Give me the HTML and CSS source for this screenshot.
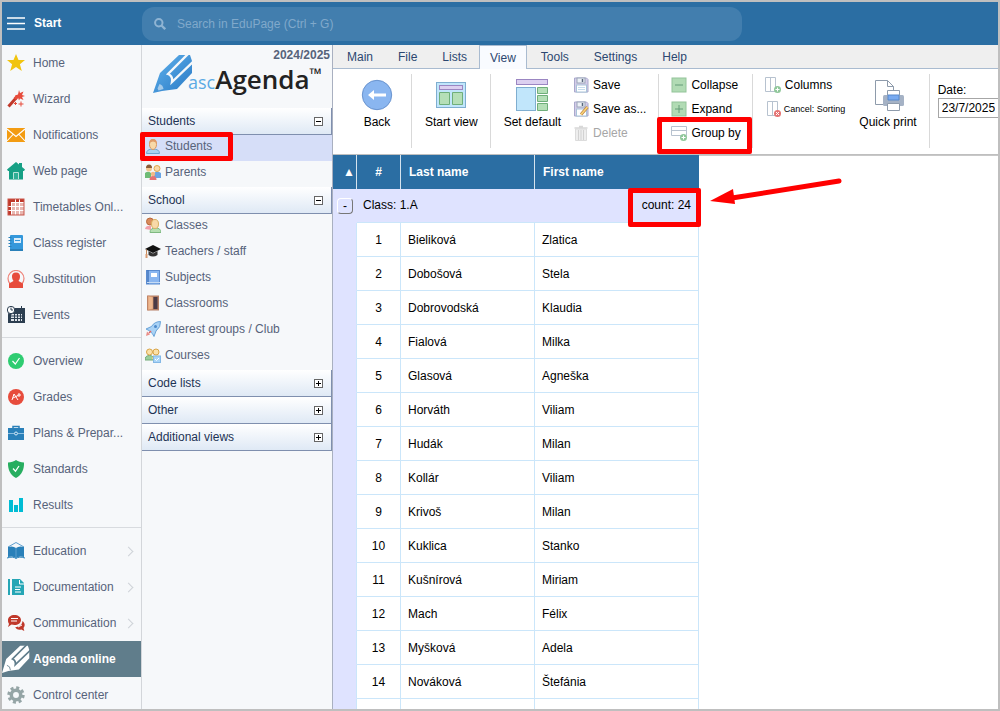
FILE: index.html
```html
<!DOCTYPE html>
<html lang="en">
<head>
<meta charset="utf-8">
<title>Agenda online - Students</title>
<link rel="stylesheet" href="styles.css">
</head>
<body>
<div class="app">
  <header class="topbar">
    <button class="menu-btn" type="button" aria-label="Menu"><svg width="18" height="14" viewBox="0 0 18 14"><path d="M0 1h18M0 6.500h18M0 12h18" stroke="#fff" stroke-width="1.700"/></svg></button>
    <span class="start">Start</span>
    <label class="search">
      <svg width="12" height="12" viewBox="0 0 12 12"><circle cx="4.800" cy="4.800" r="3.700" fill="none" stroke="#8fb4d3" stroke-width="2"/><path d="M7.500 7.500l3.700 3.700" stroke="#8fb4d3" stroke-width="2.300"/></svg>
      <input type="text" placeholder="Search in EduPage (Ctrl + G)" aria-label="Search in EduPage">
    </label>
  </header>

  <div class="workspace">
    <nav class="sidebar">
      <a href="#"><svg class="ico" viewBox="0 0 18 18"><path d="M9 0l2.500 6H18l-5.100 4.200L14.800 17 9 13.100 3.200 17l1.900-6.800L0 6h6.500z" fill="#f1c40f"/></svg>Home</a>
      <a href="#"><svg class="ico" viewBox="0 0 18 18"><path d="M1.500 16.500L9.500 7.500" stroke="#c0392b" stroke-width="3"/><path d="M8 9l2.500-3" stroke="#e74c3c" stroke-width="3.500"/><path d="M12 0l1 3 3.500-1.500L15 5l3 1-3 1 1.500 3L13 8.500l-1 2-1-3-3-2 3-1z" fill="#e74c3c"/><path d="M14 11.500v5M11.500 14h5M8.500 12v3M7 13.500h3" stroke="#e74c3c"/></svg>Wizard</a>
      <a href="#"><svg class="ico" viewBox="0 0 18 18"><rect y="2" width="18" height="14" fill="#f39c12"/><path d="M0 3l9 7.500L18 3M0 15l6-6.500M18 15l-6-6.500" fill="none" stroke="#fff" stroke-width="1.100"/></svg>Notifications</a>
      <a href="#"><svg class="ico" viewBox="0 0 18 18"><path d="M0 7.500L9 0l3 2.500V1h3v4l3 2.500-1 1.500h-1v8.500H2V9H1z" fill="#16a085"/><path d="M6.500 17v-6.500h5V17" fill="#2fae95" stroke="#b8e3da"/></svg>Web page</a>
      <a href="#"><svg class="ico" viewBox="0 0 18 18"><rect x="1" y="1" width="16" height="16" fill="#e8b6b0"/><path d="M1 1h16v3H1zM1 1h3v16H1z" fill="#c0392b"/><path d="M4.500 4v13M8.500 1v16M12.500 1v16M1 8.500h16M1 12.500h16M4 4.500h13" stroke="#fff"/><rect x="1" y="1" width="16" height="16" fill="none" stroke="#c9574b"/></svg>Timetables Onl...</a>
      <a href="#"><svg class="ico" viewBox="0 0 18 18"><rect x="3" y="1" width="13" height="16" rx="1" fill="#3498db"/><rect x="3" y="15" width="13" height="2" fill="#2980b9"/><path d="M1.500 3.500h3M1.500 6.500h3M1.500 9.500h3M1.500 12.500h3" stroke="#2980b9"/><rect x="7" y="4" width="7" height="5" fill="#d8ecf9"/><path d="M8 6.500h5" stroke="#3498db"/></svg>Class register</a>
      <a href="#"><svg class="ico" viewBox="0 0 18 18"><circle cx="9" cy="8.500" r="8" fill="none" stroke="#ef8378" stroke-width="1.200"/><path d="M9 2.500c3 0 4.300 2 4 4.500-.1 2-1 3-1.500 4l4.500 2.500V18H2v-4.500L6.500 11C6 10 5.100 9 5 7c-.3-2.500 1-4.500 4-4.500z" fill="#e74c3c"/></svg>Substitution</a>
      <a href="#"><svg class="ico" viewBox="0 0 18 18"><path d="M2 2h16v15H1V9z" fill="#2c3e50"/><circle cx="4" cy="4" r="3.700" fill="#fff" stroke="#2c3e50"/><path d="M4 1.500V4h2M14.500 0v4" fill="none" stroke="#2c3e50"/><path d="M5 8h10v7H4v-6z" fill="#dfe4e9"/><path d="M7.500 7v8M10.500 7v8M13.500 7v8M4 10h12M4 12.500h12" stroke="#2c3e50"/></svg>Events</a>
      <hr>
      <a href="#"><svg class="ico" viewBox="0 0 18 18"><circle cx="9" cy="9" r="8" fill="#2ecc71"/><path d="M5.500 9l2.800 3L12.500 6" fill="none" stroke="#fff" stroke-width="1.200"/></svg>Overview</a>
      <a href="#"><svg class="ico" viewBox="0 0 18 18"><circle cx="9" cy="9" r="8" fill="#e74c3c"/><path d="M5 12l2-6 4 6M6 10l5-2.500M12 5v4M10.500 7h3.500" fill="none" stroke="#fff"/></svg>Grades</a>
      <a href="#"><svg class="ico" viewBox="0 0 18 18"><path d="M6 4V2.500h6V4" fill="none" stroke="#2980b9" stroke-width="1.500"/><rect x="1" y="4" width="16" height="12" fill="#2980b9"/><path d="M1 9.500h6M11 9.500h6" stroke="#8fc0e2"/><circle cx="9" cy="9.500" r="1.500" fill="none" stroke="#d8ecf9"/></svg>Plans &amp; Prepar...</a>
      <a href="#"><svg class="ico" viewBox="0 0 18 18"><path d="M9 0c2 1.800 5 2.200 8 2.500C17.300 9 15 15 9 18 3 15 .700 9 1 2.500 4 2.200 7 1.800 9 0z" fill="#27ae60"/><path d="M6 8.500l2.500 2.700L12 6" fill="none" stroke="#fff" stroke-width="1.200"/></svg>Standards</a>
      <a href="#"><svg class="ico" viewBox="0 0 18 18"><path d="M2 4h4v12H2zM7 9h4v7H7zM12 2h4v14h-4z" fill="#00bcd4"/></svg>Results</a>
      <hr>
      <a href="#"><svg class="ico" viewBox="0 0 18 18"><path d="M1 5l8-4.500L17 5" fill="none" stroke="#5f9fce"/><path d="M1 5q5-1.500 8 1 3-2.500 8-1v10q-5-1.500-8 1-3-2.500-8-1z" fill="#2980b9"/><path d="M9 6v9" stroke="#5f9fce"/><path d="M0 16q6-2 9 .5 3-2.500 9-.5" fill="none" stroke="#2980b9"/></svg>Education<span class="chev"></span></a>
      <a href="#"><svg class="ico" viewBox="0 0 18 18"><path d="M1 1h2v16H1zM5 1h8l4 4v12H5z" fill="#26a6b5"/><path d="M12.500 2v4H17" fill="none" stroke="#fff"/><path d="M8 9h6M8 11.500h5M8 14h6" stroke="#fff"/></svg>Documentation<span class="chev"></span></a>
      <a href="#"><svg class="ico" viewBox="0 0 18 18"><path d="M1 13l1-3A5.500 5.500 0 0 1 1 6c0-3 3-5 6.500-5S14 3 14 6s-3 5-6.500 5c-1 0-2-.2-3-.5z" fill="#c0392b"/><path d="M15.500 7c3 2.500 2.500 5 1 7l.8 3-3-1.500c-3 .7-5.500-.5-6-2.500 4 0 7-2.500 7.200-6z" fill="#c0392b"/><path d="M4 4.500h7M4 7h6" stroke="#fff"/><path d="M11 13l4-2" stroke="#fff"/></svg>Communication<span class="chev"></span></a>
      <a href="#" class="active"><svg class="pen" viewBox="0 0 40 40"><path d="M0 40l6-20L26 1h11l2 6v12L24 35 9 37z" fill="#fff"/><path d="M35 0L15 20q5 2 4 8L41 7" fill="none" stroke="#607d8b" stroke-width="2.400"/><path d="M7 29q5 1 5 7" fill="none" stroke="#607d8b" stroke-width="1.200"/></svg>Agenda online</a>
      <a href="#"><svg class="ico" viewBox="0 0 18 18"><circle cx="9" cy="9" r="4.700" fill="none" stroke="#95a5a6" stroke-width="3.500"/><circle cx="9" cy="9" r="7.200" fill="none" stroke="#95a5a6" stroke-width="3" stroke-dasharray="3 2.650"/></svg>Control center</a>
    </nav>

    <aside class="views">
      <div class="brand">
        <div class="year">2024/2025</div>
        <div class="logo">
          <svg width="40" height="40" viewBox="0 0 40 40"><defs><linearGradient id="ink" x1="0" y1="0" x2="1" y2="1"><stop offset="0" stop-color="#62b4ee"/><stop offset="1" stop-color="#2878c4"/></linearGradient></defs><path d="M0 39l7-20L26 1h11l2 6v12L24 35 9 37z" fill="url(#ink)"/><path d="M35 0L15 20q5 2 4 8L41 7" fill="none" stroke="#f6f8fa" stroke-width="2.400"/><path d="M6.500 30q3.500 1 4 5l-5 1.500-1-2z" fill="#f6f8fa" opacity=".55"/></svg>
          <span class="asc">asc</span><span class="agenda">Agenda</span><span class="tm">™</span>
        </div>
      </div>
      <button class="section" type="button">Students<span class="sign"></span></button>
      <a href="#" class="selected"><svg class="ico16" viewBox="0 0 16 16"><path d="M1.500 15.500q0-4.500 6.500-4.500t6.500 4.500z" fill="#a8d4f2" stroke="#6ea6d0"/><ellipse cx="8" cy="6.500" rx="3.500" ry="5" fill="#f8d9a8" stroke="#d9965c"/><path d="M4 6Q4 1 8 1t4 5q-1-2.500-4-2.500T4 6z" fill="#e09a66"/></svg>Students</a>
      <a href="#"><svg class="ico16" viewBox="0 0 16 16"><path d="M0 14V9q3-2.500 6 0v5z" fill="#6fbb76"/><path d="M9 14V9q3-2.500 7 0v5z" fill="#6aa5e3"/><circle cx="4" cy="4.500" r="3" fill="#f3c790"/><path d="M1 4q0-3.500 3-3.500T7 4z" fill="#8a5c35"/><circle cx="12" cy="4.500" r="3" fill="#f8d9a8" stroke="#e0a84e"/><circle cx="8" cy="10" r="2.200" fill="#f3b985"/><path d="M4.500 16q0-4 3.500-4t3.500 4z" fill="#e57373"/></svg>Parents</a>
      <button class="section" type="button">School<span class="sign"></span></button>
      <a href="#"><svg class="ico16" viewBox="0 0 16 16"><path d="M0 12q1-4 6-3v4z" fill="#f2a0ab"/><circle cx="5" cy="4.500" r="3.500" fill="#d98b5c" stroke="#b9683c"/><path d="M5 15.500q0-4.500 5.500-4.500t5.500 4.500z" fill="#b5dfb1" stroke="#7fb981"/><ellipse cx="10" cy="7" rx="3.500" ry="4.500" fill="#f8d9a8" stroke="#d8b062"/></svg>Classes</a>
      <a href="#"><svg class="ico16" viewBox="0 0 16 16"><path d="M0 6l8-4 8 4-8 4z" fill="#111"/><path d="M3.500 8v4q4.500 3 9 0V8L8 10.500z" fill="#333"/><path d="M1.500 6.500V12" stroke="#c68b5c"/><path d="M.5 11h2v4h-2z" fill="#d99a70"/></svg>Teachers / staff</a>
      <a href="#"><svg class="ico16" viewBox="0 0 16 16"><rect x="1.500" y="1.500" width="13" height="13.500" fill="#8ab6f0" stroke="#5b8cd0"/><path d="M3 1v14" stroke="#4678be" stroke-width="1.500"/><rect x="6" y="4" width="6" height="4" fill="#fff"/><path d="M2 13.500h13" stroke="#c7dcf5"/></svg>Subjects</a>
      <a href="#"><svg class="ico16" viewBox="0 0 16 16"><rect x="2" y=".5" width="12" height="15" fill="#b57f66"/><path d="M7.500 2h5v12h-5z" fill="#4b3a46"/><path d="M3 1l5 1v12l-5 1z" fill="#efb890" stroke="#d4936c" stroke-width=".7"/></svg>Classrooms</a>
      <a href="#"><svg class="ico16" viewBox="0 0 16 16"><path d="M15.500.5q-6 0-9 5L1 8l3 1.500 3.500 3.200L9 15.500l2-5.500q5-4 4.500-9.500z" fill="#a9d2f5" stroke="#5f9cd4" stroke-width=".9"/><circle cx="10.500" cy="5.500" r="1.500" fill="#4d8acb"/><path d="M1 15l1-4.500 3 3z" fill="#ea8f88"/><path d="M4 12l2-2" stroke="#df6564" stroke-width="1.500"/></svg>Interest groups / Club</a>
      <a href="#"><svg class="ico16" viewBox="0 0 16 16"><path d="M0 13q0-4.500 4.500-4.500t4 4.500z" fill="#9ccf9c" stroke="#73aa78"/><path d="M7 12q0-3.500 4.500-3.500T16 12z" fill="#f8d27c"/><circle cx="4.500" cy="5" r="3" fill="#fbe1a8" stroke="#d9a548"/><circle cx="11" cy="5" r="3" fill="#fbe1a8" stroke="#d9a548"/><rect x="8.500" y="9" width="7" height="6.500" fill="#a8d4f7" stroke="#84b8e6"/><path d="M10 12l1.500 1.500L14 11" fill="none" stroke="#fff"/></svg>Courses</a>
      <button class="section" type="button">Code lists<span class="sign plus"></span></button>
      <button class="section" type="button">Other<span class="sign plus"></span></button>
      <button class="section" type="button">Additional views<span class="sign plus"></span></button>
    </aside>

    <main class="content">
      <div class="tabs">
        <button type="button">Main</button><button type="button">File</button><button type="button">Lists</button><button type="button" class="current">View</button><button type="button">Tools</button><button type="button">Settings</button><button type="button">Help</button>
      </div>

      <div class="ribbon">
        <div class="group back">
          <button class="big" type="button"><svg width="32" height="32" viewBox="0 0 32 32"><circle cx="16" cy="16" r="14.700" fill="#8ab6f0" stroke="#6a94cf"/><path d="M7 16l6-5v3.500h12v3H13V21z" fill="#fff"/></svg>Back</button>
        </div>
        <div class="group start-view">
          <button class="big" type="button"><svg width="32" height="32" viewBox="0 0 32 32"><rect x="1.500" y="3.500" width="29" height="25" fill="#c1e6fb" stroke="#7faed0"/><rect x="4.500" y="6.500" width="23" height="4" fill="#dcd0f0" stroke="#9b86c2"/><path d="M4.500 13.500h10v12h-10zM17.500 13.500h10v12h-10z" fill="#b5dfb7" stroke="#6fae7a"/></svg>Start view</button>
        </div>
        <div class="group default">
          <button class="big" type="button"><svg width="32" height="32" viewBox="0 0 32 32"><rect x=".5" y=".5" width="31" height="5" fill="#dcd0f0" stroke="#9b86c2"/><rect x=".5" y="8.500" width="19" height="23" fill="#c1e6fb" stroke="#7faed0"/><path d="M21.500 8.500h10v6h-10zM21.500 16.500h10v6h-10zM21.500 24.500h10v7h-10z" fill="#b5dfb7" stroke="#6fae7a"/></svg>Set default</button>
          <div class="stack">
            <button type="button"><svg class="ico16" viewBox="0 0 16 16"><path d="M1.500 1h12l1.500 1.500V15H1.500z" fill="#d4cce9" stroke="#a9a9cc"/><rect x="4" y="1" width="8" height="5" fill="#edf1f6" stroke="#9aa5b8"/><path d="M9.500 2v3" stroke="#58677c" stroke-width="1.500"/><rect x="3.500" y="8" width="10" height="7" fill="#fff" stroke="#a8c4d8"/><path d="M5 10.500h7M5 12.500h7" stroke="#c4dced"/></svg>Save</button>
            <button type="button"><svg class="ico16" viewBox="0 0 16 16"><path d="M1.500 1h12l1.500 1.500V15H1.500z" fill="#d4cce9" stroke="#a9a9cc"/><rect x="4" y="1" width="8" height="5" fill="#edf1f6" stroke="#9aa5b8"/><path d="M9.500 2v3" stroke="#58677c" stroke-width="1.500"/><rect x="3.500" y="8" width="10" height="7" fill="#fff" stroke="#a8c4d8"/><path d="M8 13.500L14.500 6" stroke="#bd8545" stroke-width="3"/><path d="M8 13.500L14.500 6" stroke="#fbd578" stroke-width="1.600"/></svg>Save as...</button>
            <button type="button" disabled><svg class="ico16" viewBox="0 0 16 16"><path d="M2.500 4h11v11.500h-11z" fill="#eee" stroke="#dcdcdc"/><path d="M1.500 3h13M6 1.500h4" stroke="#d8d8d8" stroke-width="1.500"/><path d="M5.500 5v10M8 5v10M10.500 5v10" stroke="#d2d2d2"/></svg>Delete</button>
          </div>
        </div>
        <div class="group">
          <div class="stack rows">
            <button type="button"><svg class="ico16" viewBox="0 0 16 16"><rect x="1" y="1" width="14" height="14" fill="#b1dbb4" stroke="#93c49a"/><path d="M4 8h8" stroke="#659c78"/></svg>Collapse</button>
            <button type="button"><svg class="ico16" viewBox="0 0 16 16"><rect x="1" y="1" width="14" height="14" fill="#b1dbb4" stroke="#93c49a"/><path d="M4 8h8M8 4v8" stroke="#659c78"/></svg>Expand</button>
            <button type="button"><svg class="ico16" viewBox="0 0 16 16"><path d="M.5 1.500h15v9H.5zM.5 5.500h15" fill="#fff" stroke="#b7c2cf"/><circle cx="12.500" cy="12.500" r="3.500" fill="#8fc79a"/><path d="M10.500 12.500h4M12.500 10.500v4" stroke="#fff"/></svg>Group by</button>
          </div>
        </div>
        <div class="group print">
          <div class="stack">
            <button type="button"><svg class="ico16" viewBox="0 0 16 16"><path d="M.5.500h10v14H.5zM5.500.500v14" fill="#fff" stroke="#b7c2cf"/><circle cx="12.500" cy="12.500" r="3.500" fill="#8fc79a"/><path d="M10.500 12.500h4M12.500 10.500v4" stroke="#fff"/></svg>Columns</button>
            <button type="button" class="small"><svg class="ico16" viewBox="0 0 16 16"><path d="M2.500.500h10v14h-10zM7.500.500v14" fill="#fff" stroke="#b7c2cf"/><circle cx="12.500" cy="12.500" r="3.500" fill="#e57373"/><path d="M11 11l3 3M14 11l-3 3" stroke="#fff"/></svg>Cancel: Sorting</button>
          </div>
          <button class="big" type="button"><svg width="32" height="32" viewBox="0 0 32 32"><path d="M3.500 1.500h12l6 6v18h-18z" fill="#fff" stroke="#8e9bab"/><path d="M15.500 1.500v6h6" fill="none" stroke="#8e9bab"/><path d="M15.500 11.500h12v8h-12z" fill="#fff" stroke="#8e9bab"/><rect x="11" y="16" width="21" height="11" rx="1.500" fill="#a5b2c5"/><path d="M16 16h11v5H16z" fill="#78aaf0" stroke="#5788cb"/><path d="M15.500 24.500h12v7h-12z" fill="#fff" stroke="#8e9bab"/></svg>Quick print</button>
        </div>
        <div class="date">
          <label for="date">Date:</label>
          <input id="date" type="text" value="23/7/2025">
        </div>
      </div>

      <div class="grid">
        <table>
          <thead><tr><th class="c-sort">▲</th><th class="c-num">#</th><th class="c-last">Last name</th><th class="c-first">First name</th></tr></thead>
          <tbody>
            <tr class="class-row"><td><button type="button" class="fold" aria-label="Collapse class">-</button></td><td colspan="3"><div class="class-info"><span>Class: 1.A</span><span>count: 24</span></div></td></tr>
            <tr><td></td><td>1</td><td>Bieliková</td><td>Zlatica</td></tr>
            <tr><td></td><td>2</td><td>Dobošová</td><td>Stela</td></tr>
            <tr><td></td><td>3</td><td>Dobrovodská</td><td>Klaudia</td></tr>
            <tr><td></td><td>4</td><td>Fialová</td><td>Milka</td></tr>
            <tr><td></td><td>5</td><td>Glasová</td><td>Agneška</td></tr>
            <tr><td></td><td>6</td><td>Horváth</td><td>Viliam</td></tr>
            <tr><td></td><td>7</td><td>Hudák</td><td>Milan</td></tr>
            <tr><td></td><td>8</td><td>Kollár</td><td>Viliam</td></tr>
            <tr><td></td><td>9</td><td>Krivoš</td><td>Milan</td></tr>
            <tr><td></td><td>10</td><td>Kuklica</td><td>Stanko</td></tr>
            <tr><td></td><td>11</td><td>Kušnírová</td><td>Miriam</td></tr>
            <tr><td></td><td>12</td><td>Mach</td><td>Félix</td></tr>
            <tr><td></td><td>13</td><td>Myšková</td><td>Adela</td></tr>
            <tr><td></td><td>14</td><td>Nováková</td><td>Štefánia</td></tr>
            <tr><td></td><td></td><td></td><td></td></tr>
          </tbody>
        </table>
      </div>
    </main>
  </div>

  <div class="mark mark-students"></div>
  <div class="mark mark-group"></div>
  <div class="mark mark-count"></div>
  <svg class="arrow" width="134" height="30" viewBox="0 0 134 30"><path d="M129 3L22 20" stroke="#f00" stroke-width="5" stroke-linecap="round"/><path d="M0 23l23-12 2 15z" fill="#f00"/></svg>
</div>
</body>
</html>
```

FILE: styles.css
```css
* { box-sizing: border-box; }
body {
  margin: 0;
  font: 12px/16px "Liberation Sans", Arial, sans-serif;
  color: #000;
  background: #fff;
}
button, input { font: inherit; color: inherit; }
button { border: 0; padding: 0; background: none; }
a { color: inherit; text-decoration: none; }
svg { flex: none; display: block; }

.app {
  position: relative;
  display: flex;
  flex-direction: column;
  height: 100vh;
  overflow: hidden;
  border: 2px solid #bfbfbf;
}

.topbar {
  flex: none;
  display: flex;
  align-items: center;
  height: 43px;
  padding-left: 5px;
  background: #2b6ea3;
  color: #fff;
}
.menu-btn { margin-right: 9px; }
.start { width: 108px; padding-bottom: 2px; font-weight: bold; }
.search {
  display: flex;
  align-items: center;
  gap: 11px;
  flex: 0 1 600px;
  height: 34px;
  padding: 0 12px;
  border-radius: 12px;
  background: #427eae;
}
.search input {
  flex: 1;
  min-width: 0;
  border: 0;
  padding: 0;
  background: none;
  outline: none;
}
.search input::placeholder { color: #80a9cb; opacity: 1; }

.workspace { flex: 1; display: flex; min-height: 0; }

.sidebar {
  flex: none;
  width: 140px;
  overflow: hidden;
  border-right: 1px solid #d3d6da;
  background: #f6f8fa;
  color: #56637a;
}
.sidebar a {
  display: flex;
  align-items: center;
  gap: 8px;
  height: 36px;
  padding-left: 5px;
  white-space: nowrap;
}
.ico { width: 18px; height: 18px; }
.sidebar hr { margin: 4px 0 5px; border: 0; height: 1px; background: #d8dbdf; }
.chev {
  width: 7px;
  height: 7px;
  margin: 0 9px 0 auto;
  border: solid #cfd3d8;
  border-width: 1px 1px 0 0;
  transform: rotate(45deg);
}
.sidebar .active {
  gap: 3px;
  padding-left: 0;
  background: #607d8b;
  color: #fff;
  font-weight: bold;
}
.pen { width: 28px; height: 28px; }

.views {
  flex: none;
  width: 191px;
  border-right: 1px solid #a9b0c0;
  background: #f6f8fa;
  color: #56637a;
}
.brand { height: 63px; padding-top: 2px; overflow: hidden; }
.year { padding-right: 2px; text-align: right; font-weight: bold; }
.logo {
  display: flex;
  align-items: flex-end;
  height: 40px;
  margin-top: -9px;
  padding-left: 11px;
  font-family: "Open Sans", "Noto Sans", sans-serif;
}
.asc { margin-left: -5px; color: #5baae4; font-size: 18px; line-height: 24px; }
.agenda { color: #222; font-size: 26px; font-weight: 600; line-height: 30px; }
.tm { align-self: flex-start; padding-top: 10px; color: #222; font-size: 16px; font-weight: bold; line-height: 20px; }
.section {
  display: flex;
  align-items: center;
  justify-content: space-between;
  width: 100%;
  height: 27px;
  padding: 0 8px 0 6px;
  border: 1px solid #7f8fae;
  border-width: 0 1px 1px 0;
  background: linear-gradient(#fff, #dfe9f5);
  color: #1d3355;
}
.sign {
  width: 9px;
  height: 9px;
  border: 1px solid #666;
  background: linear-gradient(#000, #000) center / 5px 1px no-repeat #fff;
}
.sign.plus {
  background: linear-gradient(#000, #000) center / 5px 1px no-repeat,
    linear-gradient(#000, #000) center / 1px 5px no-repeat #fff;
}
.views a {
  display: flex;
  align-items: center;
  gap: 4px;
  height: 26px;
  padding: 0 0 4px 3px;
}
.views .selected { background: #d6def8; }
.ico16 { width: 16px; height: 16px; }

.content { flex: 1; min-width: 0; display: flex; flex-direction: column; }
.tabs {
  flex: none;
  display: flex;
  height: 24px;
  padding-left: 1px;
  border-bottom: 1px solid #a9bbd0;
  background: #efefef;
  color: #2c4770;
}
.tabs button { height: 24px; padding: 0 12px 0 13px; }
.tabs button.current { padding: 0 10px; border: 1px solid #a9bbd0; border-bottom: 0; background: #f9fbff; }
.tabs .current + button { margin-left: 1px; }

.ribbon {
  flex: none;
  display: flex;
  height: 86px;
  padding: 5px 0 6px;
  border-bottom: 1px solid #bfbfbf;
  overflow: hidden;
  white-space: nowrap;
}
.group { display: flex; flex: none; padding: 0 11px 0 12px; border-right: 1px solid #d9d9d9; }
.group.back { padding: 0 18px 0 28px; }
.group.start-view { padding: 0 12px 0 13px; }
.group.default { padding: 0 12px 0 13px; }
.big {
  display: flex;
  flex-direction: column;
  align-items: center;
  gap: 3px;
  align-self: flex-start;
  padding-top: 5px;
}
.stack { display: flex; flex-direction: column; align-items: flex-start; }
.stack button { display: flex; align-items: center; gap: 4px; height: 24px; padding-bottom: 2px; }
.default .stack { margin-left: 12px; }
.stack button:disabled { color: #a6a6a6; }
.stack .small { font-size: 9px; gap: 3px; }
.group.print { padding-right: 12px; }
.print .stack { margin-right: 14px; }
.date { flex: 1; min-width: 0; display: flex; flex-direction: column; padding: 8px 0 0 8px; }
.date input { width: 100%; height: 20px; padding: 0 3px; border: 1px solid #a6a6a6; border-right: 0; border-radius: 0; background: #fff; }

.grid { flex: 1; min-height: 0; overflow: hidden; box-shadow: inset 0 1px #c8c8c8; }
table { width: 366px; border-collapse: separate; border-spacing: 0; table-layout: fixed; }
th, td { height: 34px; padding: 0 7px; text-align: left; }
th { background: #2b6ea3; color: #fff; border-right: 1px solid #d5e3ee; padding-left: 8px; }
th:last-child { border-right-color: #2b6ea3; }
td { border: 1px solid #cbe6fa; border-width: 0 1px 1px 0; }
td:first-child { border-bottom-color: #dfe3ff; background: #dfe3ff; }
.c-sort { width: 24px; padding: 0 1px; text-align: right; }
.c-num { width: 44px; padding: 0; text-align: center; }
.c-last { width: 134px; }
td:nth-child(2) { text-align: center; }
.class-row td { padding: 0 8px 0 6px; border-right: 0; background: #dfe3ff; }
.class-row td:first-child { padding: 0 4px; }
.class-info { display: flex; justify-content: space-between; padding-bottom: 2px; }
.fold {
  display: block;
  width: 16px;
  height: 16px;
  border: 1px solid #777;
  border-color: #fff #777 #777 #fff;
  border-radius: 4px;
  line-height: 12px;
}

.mark { position: absolute; border: 5px solid #f00; border-radius: 2px; }
.mark-students { left: 138px; top: 130px; width: 93px; height: 29px; }
.mark-group { left: 655px; top: 115px; width: 95px; height: 37px; }
.mark-count { left: 626px; top: 186px; width: 73px; height: 39px; }
.arrow { position: absolute; left: 708px; top: 176px; }
```
